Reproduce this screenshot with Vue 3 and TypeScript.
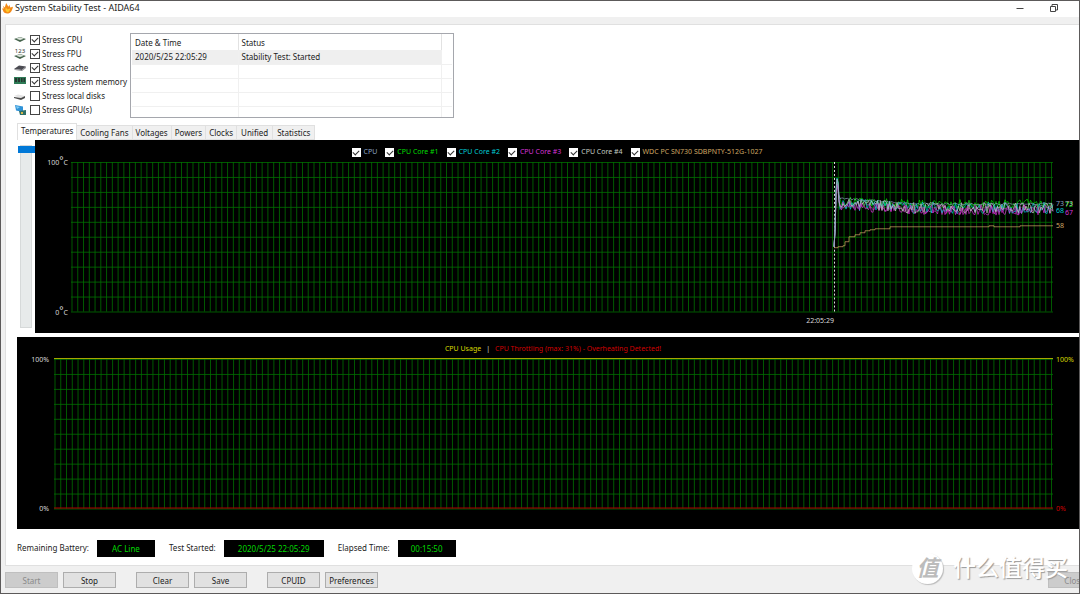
<script setup lang="ts">
import { ref } from 'vue'

interface Stress { id: string; label: string; on: boolean }
const stresses = ref<Stress[]>([
  { id: 'cpu', label: 'Stress CPU', on: true },
  { id: 'fpu', label: 'Stress FPU', on: true },
  { id: 'cache', label: 'Stress cache', on: true },
  { id: 'memory', label: 'Stress system memory', on: true },
  { id: 'disk', label: 'Stress local disks', on: false },
  { id: 'gpu', label: 'Stress GPU(s)', on: false },
])

const tabs = ['Temperatures', 'Cooling Fans', 'Voltages', 'Powers', 'Clocks', 'Unified', 'Statistics']
const activeTab = ref('Temperatures')
const scroll = ref(0)

const sensors = ref([
  { label: 'CPU', tone: 'slate', on: true },
  { label: 'CPU Core #1', tone: 'green', on: true },
  { label: 'CPU Core #2', tone: 'cyan', on: true },
  { label: 'CPU Core #3', tone: 'magenta', on: true },
  { label: 'CPU Core #4', tone: 'silver', on: true },
  { label: 'WDC PC SN730 SDBPNTY-512G-1027', tone: 'tan', on: true },
])

// Plot space: 982 units wide, 150 units for 0..100 degrees
const W = 982
const USAGE_W = 999
const START = 763
const range = (n: number) => Array.from({ length: n }, (_, i) => i)
const gridX = (count: number, width: number) => range(count + 1).map(i => 1 + (i * (width - 2.5)) / count)
const tempCols = gridX(170, W)
const usageCols = gridX(173, USAGE_W)
const rows = range(11).map(i => i * 15 + 0.5)

function noise(seed: number) {
  let s = seed
  return () => {
    s = (s * 1103515245 + 12345) % 2147483648
    return s / 2147483648
  }
}

function coreTrace(seed: number, early: number, late: number, spread: number, peak: number) {
  const rnd = noise(seed)
  const pts = [`${START},${85}`, `${START + 1},70`, `${START + 2},${peak + 12}`, `${START + 3},${peak}`, `${START + 4},${peak + 4}`, `${START + 5},${early - 3}`]
  for (let x = START + 6; x <= W; x += 1.5) {
    const t = Math.min(1, (x - START) / 80)
    const y = early + (late - early) * t + (rnd() - 0.5) * spread
    pts.push(`${x},${y.toFixed(1)}`)
  }
  return pts.join(' ')
}

function steps(points: number[][]) {
  return points.map(([x, y], i) => (i ? `${x},${points[i - 1][1]} ${x},${y}` : `${x},${y}`)).join(' ')
}

const driveTrace = steps([
  [763, 86], [767, 85], [772, 84], [774, 80], [778, 75], [784, 73], [789, 71], [794, 69],
  [799, 68], [804, 67], [819, 65], [918, 64], [923, 65], [949, 64], [982, 64],
])

const traces = [
  { tone: 'magenta', points: coreTrace(77, 42, 48, 11, 24) },
  { tone: 'green', points: coreTrace(12, 39, 42, 9, 20) },
  { tone: 'cyan', points: coreTrace(31, 42, 46, 12, 16) },
  { tone: 'magenta', points: coreTrace(404, 43, 48, 10, 22) },
  { tone: 'silver', points: coreTrace(58, 41, 46, 11, 17) },
  { tone: 'slate', points: coreTrace(9, 36, 42, 2, 18) },
  { tone: 'tan', points: driveTrace },
]

const readings = [
  { value: '73', tone: 'slate', temp: 72, slot: 0 },
  { value: '72', tone: 'green', temp: 71, slot: 1 },
  { value: '73', tone: 'silver', temp: 72, slot: 1 },
  { value: '68', tone: 'cyan', temp: 67, slot: 0 },
  { value: '67', tone: 'magenta', temp: 66, slot: 1 },
  { value: '58', tone: 'tan', temp: 57, slot: 0 },
]
</script>

<template>
  <main class="window">
    <header class="titlebar">
      <svg class="flame" viewBox="0 0 12 12" aria-hidden="true">
        <path d="M1 3 L3 5 L4.500 0 L7 4 L8 2 L9 5 L12 4 Q11 10 7 11.500 Q2 12 1 8 L0 6 L2 6 Z" fill="#f58a16" />
        <path d="M4 5 L6 7 L9 6 Q8 10 6 10 Q3 9 4 5Z" fill="#ffc928" />
      </svg>
      <h1>System Stability Test - AIDA64</h1>
      <div class="caption">
        <button aria-label="Minimize"><svg viewBox="0 0 8 8"><path d="M0.500 4.500H7.500" /></svg></button>
        <button aria-label="Restore"><svg viewBox="0 0 8 8"><path d="M0.500 2.500H5.500V7.500H0.500ZM2 2.500V0.500H7.500V6H5.500" /></svg></button>
      </div>
    </header>

    <section class="panel">
      <div class="top">
        <ul class="stresses">
          <li v-for="s in stresses" :key="s.id">
            <svg class="device" viewBox="0 0 12 12" aria-hidden="true">
              <g v-if="s.id === 'cpu'">
                <path d="M0 5 L6 3 L12 5 L6 8 Z" fill="#44624b" />
                <path d="M2 4.800 L6 3.300 L10 4.800 L6 6 Z" fill="#dfe7df" />
              </g>
              <g v-else-if="s.id === 'fpu'">
                <path d="M0 8 L6 6 L12 8 L6 11 Z" fill="#44624b" />
                <path d="M2 7.800 L6 6.300 L10 7.800 L6 9 Z" fill="#dfe7df" />
                <text x="6" y="5" text-anchor="middle" font-size="6" fill="#333">123</text>
              </g>
              <g v-else-if="s.id === 'cache'">
                <path d="M0 7 L5 3.500 L12 4.500 L8 8 Z" fill="#4b4b52" />
                <path d="M0 7 L8 8 L12 4.500 V6 L8 9 L1 8Z" fill="#8d8d92" />
              </g>
              <g v-else-if="s.id === 'memory'">
                <path d="M0 1H12V8H0Z" fill="#2d7a55" />
                <path d="M1 2H3V6H1ZM4 2H6V6H4ZM7 2H8.500V6H7ZM9.500 2H11V6H9.500Z" fill="#26352f" />
              </g>
              <g v-else-if="s.id === 'disk'">
                <path d="M0 6 L4 4.500 L11 6 L7 8 Z" fill="#e4e4e4" />
                <path d="M0 7 L7 8 L11 6 V8 L7 10 L0 8Z" fill="#4a4a4a" />
              </g>
              <g v-else>
                <path d="M1 1 L9 2.500 V8 L2 6.500Z" fill="#2f93d8" />
                <path d="M2 2 L6 3 L3 5Z" fill="#83cbf2" />
                <path d="M5 7 L12 6 V11 H6Z" fill="#2e6f68" />
                <path d="M7 8H9V10H7Z" fill="#d8b84a" />
              </g>
            </svg>
            <label><input v-model="s.on" type="checkbox" />{{ s.label }}</label>
          </li>
        </ul>

        <div class="log">
          <table>
            <colgroup><col class="c-date" /><col class="c-status" /><col /></colgroup>
            <thead><tr><th>Date &amp; Time</th><th>Status</th><th></th></tr></thead>
            <tbody>
              <tr class="picked"><td>2020/5/25 22:05:29</td><td>Stability Test: Started</td><td></td></tr>
              <tr v-for="n in 4" :key="n"><td></td><td></td><td></td></tr>
            </tbody>
          </table>
        </div>
      </div>

      <nav class="tabs" role="tablist">
        <button v-for="t in tabs" :key="t" role="tab" :aria-selected="t === activeTab" :class="{ active: t === activeTab }" @click="activeTab = t">{{ t }}</button>
      </nav>

      <div class="temps">
        <input v-model="scroll" class="slider" type="range" min="0" max="100" aria-label="Scale" />
        <div class="chart temp-chart">
          <div class="legend">
            <label v-for="s in sensors" :key="s.label" :class="s.tone"><input v-model="s.on" type="checkbox" />{{ s.label }}</label>
          </div>
          <div class="scale">
            <span>100<sup>°</sup>C</span>
            <span>0<sup>°</sup>C</span>
          </div>
          <div class="plot">
            <svg :viewBox="`0 0 ${W} 150`" preserveAspectRatio="none" aria-hidden="true">
              <line v-for="x in tempCols" :key="'c' + x" class="grid" :x1="x" :x2="x" y1="0" y2="150" />
              <line v-for="y in rows" :key="'r' + y" class="grid" x1="0" :x2="W" :y1="y" :y2="y" />
              <line class="marker" :x1="START + 0.5" :x2="START + 0.5" y1="0" y2="150" />
              <polyline v-for="(t, i) in traces" :key="i" :class="['trace', t.tone]" :points="t.points" />
            </svg>
          </div>
          <div class="readings">
            <span v-for="r in readings" :key="r.tone" :class="[r.tone, 'slot' + r.slot]" :style="{ top: 100 - r.temp + '%' }">{{ r.value }}</span>
          </div>
          <div class="times"><time :style="{ width: (START / W) * 100 + '%' }">22:05:29</time></div>
        </div>
      </div>

      <div class="chart usage-chart">
        <div class="legend usage-legend">
          <span class="yellow">CPU Usage</span><span class="bar">|</span><span class="red">CPU Throttling (max: 31%) - Overheating Detected!</span>
        </div>
        <div class="scale"><span>100%</span><span>0%</span></div>
        <div class="plot">
          <svg :viewBox="`0 0 ${USAGE_W} 150`" preserveAspectRatio="none" aria-hidden="true">
            <line v-for="x in usageCols" :key="'c' + x" class="grid" :x1="x" :x2="x" y1="0" y2="150" />
            <line v-for="y in rows" :key="'r' + y" class="grid" x1="0" :x2="USAGE_W" :y1="y" :y2="y" />
            <line class="usage" x1="0" :x2="USAGE_W" y1="-0.5" y2="-0.5" />
            <line class="throttle" x1="0" :x2="USAGE_W" y1="149.5" y2="149.5" />
          </svg>
        </div>
        <div class="scale right"><span class="yellow">100%</span><span class="red">0%</span></div>
      </div>

      <div class="status">
        <span>Remaining Battery:</span><output class="battery">AC Line</output>
        <span>Test Started:</span><output class="started">2020/5/25 22:05:29</output>
        <span>Elapsed Time:</span><output class="elapsed">00:15:50</output>
      </div>
    </section>

    <footer class="actions">
      <div class="pair"><button disabled>Start</button><button>Stop</button></div>
      <div class="pair"><button>Clear</button><button>Save</button></div>
      <div class="pair"><button>CPUID</button><button>Preferences</button></div>
      <button class="close" disabled>Close</button>
    </footer>

    <div class="watermark"><span class="seal">值</span><span class="brand">什么值得买</span></div>
  </main>
</template>

<style>
body { background: #f0f0f0; }
</style>

<style scoped>
* { box-sizing: border-box; }
.window {
  position: relative;
  display: flex;
  flex-direction: column;
  min-height: 100vh;
  overflow: hidden;
  background: #f0f0f0;
  border: 1px solid #5c5a5a;
  color: #1c1c1c;
  font-family: "Noto Sans", "Noto Sans CJK SC", sans-serif;
  font-size: 8px;
  line-height: 12px;
}
button, input { font: inherit; color: inherit; margin: 0; padding: 0; }
.titlebar { display: flex; align-items: center; height: 16px; padding: 0 21px 2px 1px; background: #fff; }
.flame { width: 11px; height: 11px; }
h1 { margin: 0 auto 0 2px; font-size: 9px; font-weight: 400; line-height: 14px; }
.caption { display: flex; gap: 26px; }
.caption button { width: 8px; height: 8px; border: 0; background: none; }
.caption svg { display: block; width: 8px; height: 8px; fill: none; stroke: #444; }

.panel {
  flex: 1;
  display: flex;
  flex-direction: column;
  margin: 7px 0 0 4px;
  background: #fff;
  border: 1px solid #e0e0e0;
  border-right: 0;
}
.top { display: flex; gap: 3px; padding: 8px 0 0 8px; height: 97px; }
.stresses { list-style: none; margin: 0; padding: 0; width: 113px; }
.stresses li { display: flex; align-items: center; gap: 4px; height: 14px; white-space: nowrap; }
.device { flex: none; width: 12px; height: 12px; }
.stresses label { display: flex; align-items: center; gap: 2px; }
input[type="checkbox"] {
  appearance: none;
  flex: none;
  width: 10px;
  height: 10px;
  border: 1px solid #444;
  background: #fff;
}
input[type="checkbox"]:checked::after {
  content: "";
  display: block;
  width: 3px;
  height: 5px;
  margin: 0 auto;
  border: solid #333;
  border-width: 0 1px 1px 0;
  transform: rotate(45deg);
}
.log { width: 324px; height: 85px; border: 1px solid #a5a7ad; padding: 0 1px; overflow: hidden; }
table { width: 100%; border-collapse: collapse; table-layout: fixed; }
.c-date { width: 106px; }
.c-status { width: 203px; }
th, td { height: 14px; padding: 0 3px; text-align: left; font-weight: 400; line-height: 13px; border-right: 1px solid #f0f0f0; border-bottom: 1px solid #f0f0f0; }
th { height: 16px; border-bottom: 0; border-right-color: #e2e2e2; }
th:last-child, td:last-child { border-right: 0; }
.picked td:not(:last-child) { background: #efefef; }

.tabs { display: flex; align-items: flex-end; height: 18px; padding-left: 11px; }
.tabs button { height: 15px; padding: 0 3px 1px; border: 1px solid #e0e0e0; border-left: 0; background: #f0f0f0; line-height: 11px; }
.tabs button:nth-child(n + 6) { padding: 0 4px 1px; }
.tabs .active { height: 17px; padding: 0 3px 3px; background: #fff; border-left: 1px solid #e0e0e0; border-bottom: 0; }

.temps { flex: 1 1 0px; display: flex; min-height: 160px; margin-bottom: 4px; padding-left: 11px; }
.slider { appearance: none; writing-mode: vertical-lr; width: 18px; height: auto; margin: 5px 0; background: none; }
.slider::-webkit-slider-runnable-track { width: 12px; height: 100%; margin: 0 auto; background: #e7eaea; border: 1px solid #d6d9d9; }
.slider::-webkit-slider-thumb { appearance: none; width: 17px; height: 7px; margin-left: -3px; background: #0078d7; }

.chart {
  display: grid;
  grid-template-rows: 22px 1fr 21px;
  background: #000;
  font-size: 7px;
  line-height: 10px;
  color: #d8d8d8;
}
.temp-chart { flex: 1; grid-template-columns: 36px 1fr 26px; }
.usage-chart { flex: 1 1 0px; grid-template-columns: 37px 1fr 26px; min-height: 160px; margin-left: 11px; }
.legend { grid-column: 1 / -1; display: flex; justify-content: center; align-items: center; gap: 8px; padding-top: 2px; white-space: nowrap; }
.legend label { display: flex; align-items: center; gap: 3px; }
.legend input[type="checkbox"] { width: 9px; height: 9px; border-color: #fff; }
.usage-legend { gap: 5px; padding-left: 10px; }
.scale { display: flex; flex-direction: column; justify-content: space-between; align-items: flex-end; margin: -4px 0 -6px; padding-right: 3px; }
.usage-chart .scale:not(.right) { padding-right: 5px; }
.scale.right { align-items: flex-start; padding: 0 0 0 3px; }
sup { font-size: 10px; line-height: 0; vertical-align: 1px; }
.plot { position: relative; min-width: 0; }
.plot svg { position: absolute; inset: 0; width: 100%; height: 100%; overflow: visible; }
.grid { stroke: #007000; stroke-width: 0.8; }
.marker { stroke: #ddd; stroke-dasharray: 2 2; }
.usage { stroke: #a8a800; }
.throttle { stroke: #b00000; }
.trace { fill: none; stroke: currentColor; stroke-width: 0.7; }
.readings { position: relative; }
.readings span { position: absolute; margin-top: -5px; }
.slot0 { left: 3px; }
.slot1 { left: 12px; }
.times { grid-column: 2; padding-top: 4px; }
.times time { display: block; text-align: right; }
.slate { color: #8aa0c0; }
.green { color: #00dc00; }
.cyan { color: #00cdd6; }
.magenta { color: #d633d6; }
.silver { color: #c4cdc4; }
.tan { color: #cfa663; }
.yellow { color: #d8d800; }
.red { color: #d00000; }

.status { display: flex; align-items: center; height: 36px; padding: 2px 0 0 11px; }
.status output { height: 17px; margin: 0 14px 0 8px; background: #000; color: #00d800; line-height: 17px; text-align: center; }
.battery, .elapsed { width: 58px; }
.started { width: 100px; }

.actions { display: flex; gap: 20px; height: 27px; padding: 6px 0 0 4px; }
.pair { display: flex; gap: 5px; }
.actions button { width: 53px; height: 16px; border: 1px solid #adadad; background: #e1e1e1; line-height: 13px; white-space: nowrap; }
.actions button:disabled { background: #ccc; border-color: #bfbfbf; color: #8a8a8a; }
.actions .close { flex: none; margin: 0 -22px 0 auto; }

.watermark { position: absolute; right: 11px; bottom: 9px; display: flex; align-items: center; gap: 10px; color: #fff; pointer-events: none; }
.seal { width: 31px; height: 31px; border-radius: 50%; background: #fff; box-shadow: 1px 1px 1px #bbb; color: #bcbcbc; font-size: 22px; font-style: italic; font-weight: 700; line-height: 29px; text-align: center; }
.brand { font-size: 23px; font-weight: 500; line-height: 26px; padding-bottom: 3px; text-shadow: 1px 1px 1px #999; }
</style>
